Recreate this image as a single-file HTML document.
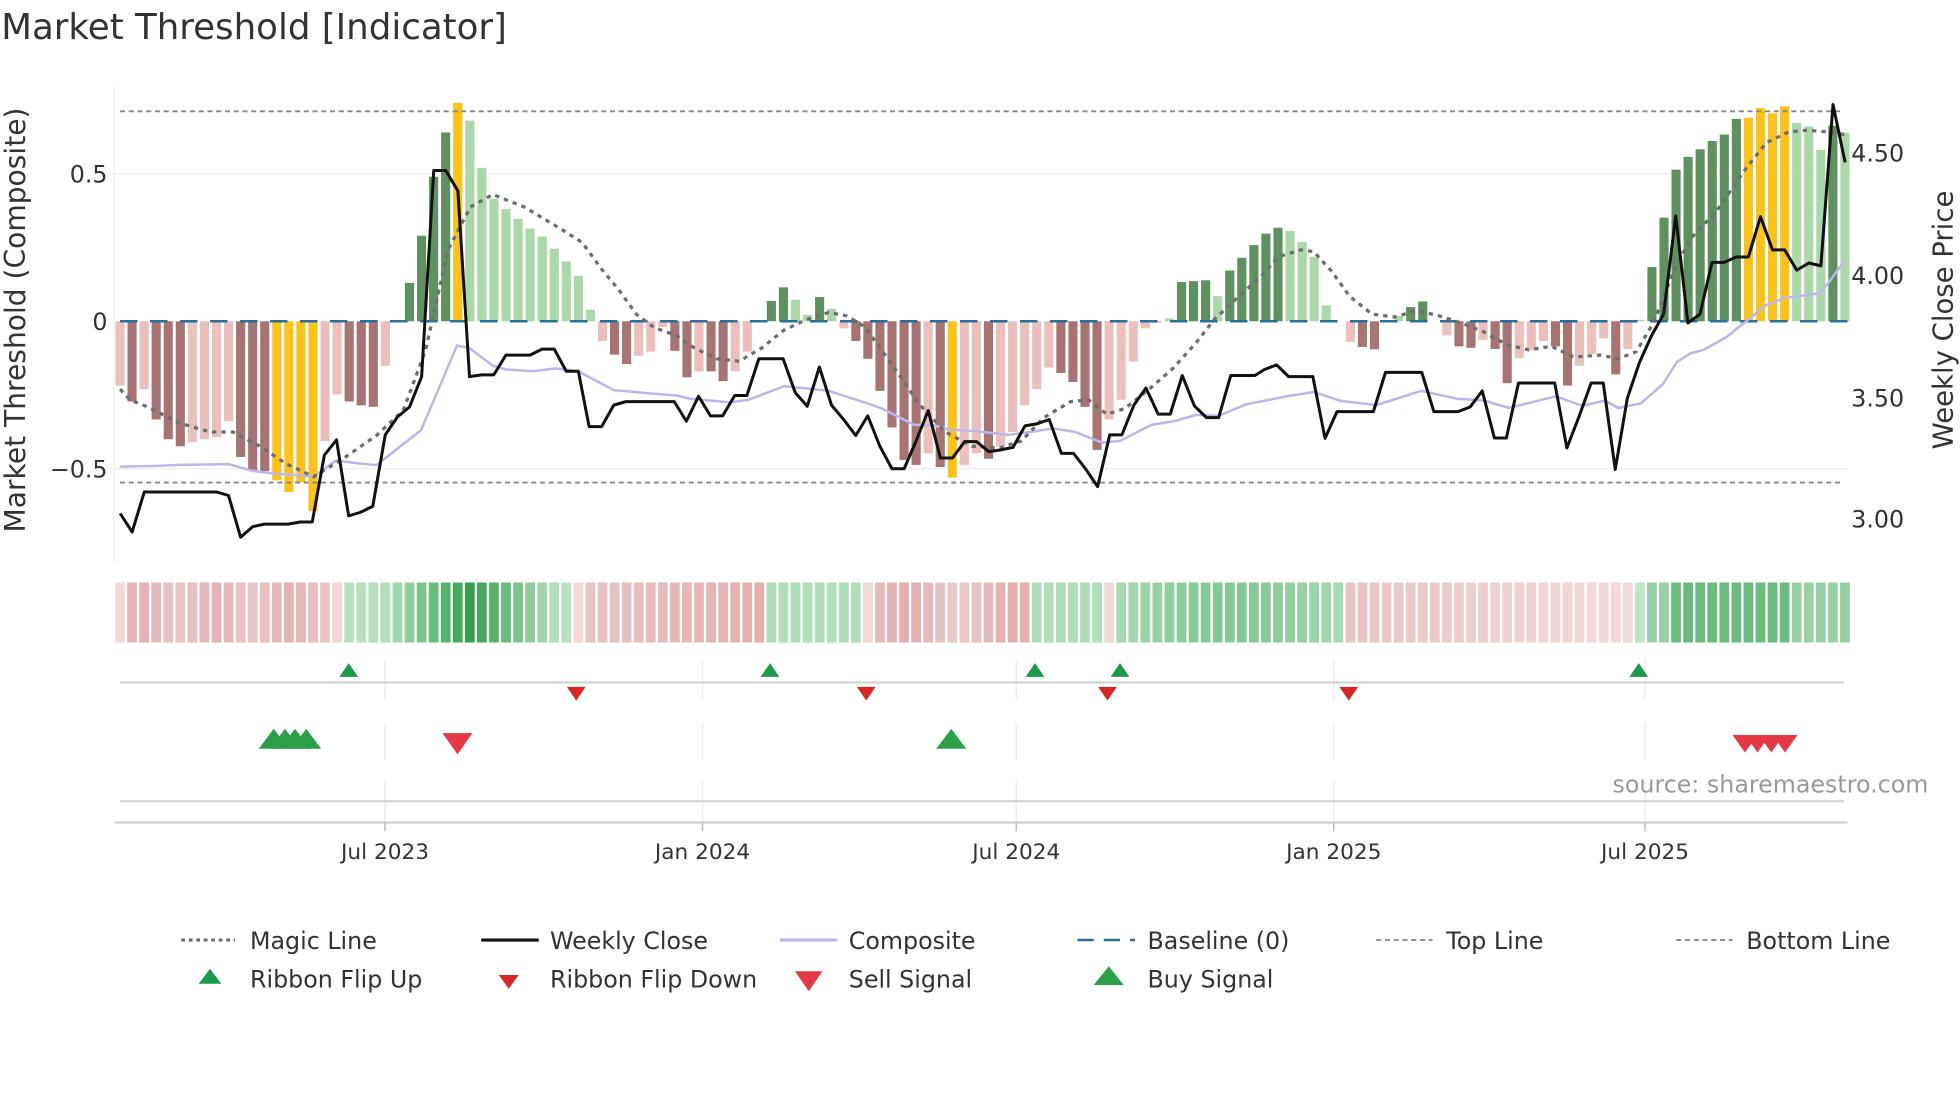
<!DOCTYPE html>
<html><head><meta charset="utf-8"><style>
html,body{margin:0;padding:0;background:#fff;}
svg{display:block;font-family:"DejaVu Sans","Liberation Sans",sans-serif;}
</style></head><body>
<svg id="s" width="1960" height="1102" viewBox="0 0 1568 881.6" xmlns="http://www.w3.org/2000/svg">
<rect width="1568" height="882" fill="#fff"/>
<text x="1" y="31" font-size="28.5" fill="#333">Market Threshold [Indicator]</text>
<line x1="91" y1="65" x2="91" y2="450" stroke="#eef0f3" stroke-width="1"/>
<line x1="91" y1="139" x2="1478" y2="139" stroke="#eef0f4" stroke-width="1.2"/>
<line x1="91" y1="375" x2="1478" y2="375" stroke="#eceefa" stroke-width="1.2"/>
<g id="bars"></g>
<line x1="96" y1="89" x2="1475" y2="89" stroke="#888" stroke-width="1.5" stroke-dasharray="4,3"/>
<line x1="96" y1="386" x2="1475" y2="386" stroke="#888" stroke-width="1.5" stroke-dasharray="4,3"/>
<line x1="96" y1="257" x2="1478" y2="257" stroke="#2a6f97" stroke-width="2" stroke-dasharray="14,10"/>
<g id="lines"></g>
<g font-size="19" fill="#333" text-anchor="end">
<text x="86" y="146">0.5</text><text x="86" y="264">0</text><text x="86" y="382">−0.5</text>
</g>
<g font-size="19" fill="#333">
<text x="1481" y="129">4.50</text><text x="1481" y="227">4.00</text><text x="1481" y="325">3.50</text><text x="1481" y="422">3.00</text>
</g>
<text transform="translate(20,256) rotate(-90)" font-size="22.5" fill="#333" text-anchor="middle">Market Threshold (Composite)</text>
<text transform="translate(1562,256) rotate(-90)" font-size="22" fill="#333" text-anchor="middle">Weekly Close Price</text>
<g id="ribbon"></g>
<g stroke="#eceef1" stroke-width="1.2">
<line x1="308" y1="528" x2="308" y2="560"/><line x1="562" y1="528" x2="562" y2="560"/><line x1="813" y1="528" x2="813" y2="560"/><line x1="1067" y1="528" x2="1067" y2="560"/><line x1="1316" y1="528" x2="1316" y2="560"/>
<line x1="308" y1="578" x2="308" y2="608"/><line x1="562" y1="578" x2="562" y2="608"/><line x1="813" y1="578" x2="813" y2="608"/><line x1="1067" y1="578" x2="1067" y2="608"/><line x1="1316" y1="578" x2="1316" y2="608"/>
<line x1="308" y1="625" x2="308" y2="657"/><line x1="562" y1="625" x2="562" y2="657"/><line x1="813" y1="625" x2="813" y2="657"/><line x1="1067" y1="625" x2="1067" y2="657"/><line x1="1316" y1="625" x2="1316" y2="657"/>
</g>
<line x1="96" y1="546" x2="1475" y2="546" stroke="#d4d4d4" stroke-width="1.8"/>
<line x1="96" y1="641" x2="1475" y2="641" stroke="#d4d4d4" stroke-width="1.8"/>
<line x1="92" y1="658" x2="1478" y2="658" stroke="#d0d0d0" stroke-width="1.8"/>
<g stroke="#bbb" stroke-width="1.2">
<line x1="308" y1="658" x2="308" y2="665"/><line x1="562" y1="658" x2="562" y2="665"/><line x1="813" y1="658" x2="813" y2="665"/><line x1="1067" y1="658" x2="1067" y2="665"/><line x1="1316" y1="658" x2="1316" y2="665"/>
</g>
<g font-size="17.3" fill="#333" text-anchor="middle">
<text x="308" y="687">Jul 2023</text><text x="562" y="687">Jan 2024</text><text x="813" y="687">Jul 2024</text><text x="1067" y="687">Jan 2025</text><text x="1316" y="687">Jul 2025</text>
</g>
<text x="1290" y="634" font-size="19" fill="#999">source: sharemaestro.com</text>
<g id="marks"></g>
<g font-size="19" fill="#333">
<line x1="145" y1="752" x2="188" y2="752" stroke="#6e6e6e" stroke-width="2.5" stroke-dasharray="3,3"/><text x="200" y="759">Magic Line</text>
<line x1="385" y1="752" x2="431" y2="752" stroke="#111" stroke-width="2.5"/><text x="440" y="759">Weekly Close</text>
<line x1="624" y1="752" x2="670" y2="752" stroke="#bdb6ec" stroke-width="2.5"/><text x="679" y="759">Composite</text>
<line x1="862" y1="752" x2="908" y2="752" stroke="#2a6f97" stroke-width="2" stroke-dasharray="13,8"/><text x="918" y="759">Baseline (0)</text>
<line x1="1101" y1="752" x2="1146" y2="752" stroke="#888" stroke-width="1.5" stroke-dasharray="4,3"/><text x="1157" y="759">Top Line</text>
<line x1="1341" y1="752" x2="1386" y2="752" stroke="#888" stroke-width="1.5" stroke-dasharray="4,3"/><text x="1397" y="759">Bottom Line</text>
<polygon points="168,775 177,787 159,787" fill="#1a9a4a"/><text x="200" y="790">Ribbon Flip Up</text>
<polygon points="399,780 415,780 407,791" fill="#d62728"/><text x="440" y="790">Ribbon Flip Down</text>
<polygon points="636,777 658,777 647,793" fill="#e63946"/><text x="679" y="790">Sell Signal</text>
<polygon points="887,773 899,788 875,788" fill="#2ca048"/><text x="918" y="790">Buy Signal</text>
</g>
</svg>
<script>
var NS="http://www.w3.org/2000/svg";
function el(p,t,a){var e=document.createElementNS(NS,t);for(var k in a)e.setAttribute(k,a[k]);p.appendChild(e);return e;}
var P=9.65,X0=96;
var B=[[-.218,'l'],[-.272,'d'],[-.23,'l'],[-.333,'d'],[-.4,'d'],[-.424,'d'],[-.41,'l'],[-.4,'l'],[-.393,'l'],[-.339,'l'],[-.46,'d'],[-.508,'d'],[-.508,'d'],[-.539,'Y'],[-.579,'Y'],[-.545,'Y'],[-.644,'Y'],[-.406,'l'],[-.248,'l'],[-.272,'d'],[-.285,'d'],[-.29,'d'],[-.151,'l'],[0,'l'],
[.13,'D'],[.29,'D'],[.49,'D'],[.64,'D'],[.74,'Y'],[.68,'L'],[.52,'L'],[.415,'L'],[.38,'L'],[.347,'L'],[.314,'L'],[.287,'L'],[.246,'L'],[.203,'L'],[.154,'L'],[.039,'L'],
[-.067,'l'],[-.113,'d'],[-.145,'d'],[-.117,'l'],[-.103,'l'],[-.02,'l'],[-.1,'d'],[-.19,'d'],[-.17,'l'],[-.17,'d'],[-.203,'d'],[-.17,'l'],[-.103,'l'],[0,'l'],
[.069,'D'],[.115,'D'],[.073,'L'],[.022,'L'],[.082,'D'],[.042,'L'],[-.024,'l'],[-.067,'d'],[-.127,'d'],[-.236,'d'],[-.36,'d'],[-.47,'d'],[-.487,'d'],[-.448,'l'],[-.494,'d'],[-.53,'Y'],[-.487,'l'],[-.448,'l'],[-.466,'d'],[-.424,'l'],[-.375,'l'],[-.285,'l'],[-.23,'l'],[-.157,'l'],[-.175,'d'],[-.206,'d'],[-.29,'d'],[-.436,'d'],[-.333,'l'],[-.266,'l'],[-.136,'l'],[-.024,'l'],[-.005,'l'],
[.01,'L'],[.133,'D'],[.136,'D'],[.139,'D'],[.085,'L'],[.172,'D'],[.215,'D'],[.258,'D'],[.297,'D'],[.317,'D'],[.306,'L'],[.269,'L'],[.218,'L'],[.054,'L'],[0,'L'],
[-.07,'l'],[-.087,'d'],[-.095,'d'],[0,'l'],[.018,'L'],[.048,'D'],[.067,'D'],[0,'l'],[-.048,'l'],[-.085,'d'],[-.09,'d'],[-.063,'l'],[-.094,'d'],[-.21,'d'],[-.125,'l'],[-.097,'l'],[-.067,'l'],[-.085,'d'],[-.218,'d'],[-.151,'l'],[-.111,'l'],[-.058,'l'],[-.18,'d'],[-.094,'l'],
[.005,'L'],[.184,'D'],[.351,'D'],[.514,'D'],[.557,'D'],[.583,'D'],[.611,'D'],[.633,'D'],[.686,'D'],[.69,'Y'],[.723,'Y'],[.705,'Y'],[.729,'Y'],[.672,'L'],[.66,'L'],[.581,'L'],[.663,'D'],[.639,'L']];
var C={d:'#a87373',l:'#ebbfbc',D:'#5f9160',L:'#aad8a8',Y:'#fbc21b'};
var g=document.getElementById('bars');
B.forEach(function(b,i){var x=X0+i*P-3.65,h=Math.abs(b[0])*236;if(h<0.5)return;var y=b[0]>0?257-h:257;el(g,'rect',{x:x.toFixed(2),y:y.toFixed(2),width:7.3,height:h.toFixed(2),fill:C[b[1]]});});
var OFF=[0,448,1008];
var L=document.getElementById('lines');
function line(segs,st){var all=[],lastX=-1;segs.forEach(function(s){var p=s[1];for(var i=0;i<p.length;i+=2){var x=p[i]/2.79+OFF[s[0]];if(x<=lastX+0.5)continue;lastX=x;all.push(x.toFixed(1)+','+(257-(900-p[i+1])*0.2857).toFixed(1));}});var a={points:all.join(' '),fill:'none'};for(var k in st)a[k]=st[k];el(L,'polyline',a);}
var comp=[[0,[268,1307,350,1305,400,1302,510,1300,560,1318,600,1325,700,1335,750,1290,800,1298,840,1303,940,1205,1020,968,1048,975,1100,1025,1130,1035,1190,1040,1240,1032,1290,1040,1370,1093,1450,1102,1510,1108]],
[1,[0,1122,40,1128,100,1145,130,1150,250,1110,290,1117,380,1127,420,1120,500,1082,550,1088,600,1095,680,1127,720,1145,790,1190,830,1190,870,1203,930,1208,1000,1218,1050,1210,1100,1200,1150,1210,1210,1240,1250,1235,1320,1190,1370,1180,1420,1162,1470,1165,1530,1133]],
[2,[0,1125,60,1110,120,1098,180,1123,260,1135,360,1095,440,1117,500,1122,555,1143,660,1110,720,1137,770,1122,800,1143,850,1130,900,1075,930,1015,960,990,990,980,1040,945,1090,895,1130,855,1170,835,1250,822,1270,790,1308,725]]];
var magic=[[0,[268,1090,290,1120,330,1140,400,1185,470,1210,520,1210,580,1250,640,1300,700,1335,760,1290,840,1220,900,1150,950,980,1000,700,1050,580,1100,545,1170,580,1250,640,1300,680,1340,750,1380,810,1420,880,1460,918,1510,940]],
[1,[0,645,40,680,100,775,150,855,190,910,250,930,300,975,350,1005,400,1012,450,975,500,925,550,895,600,875,640,885,680,915,720,985,760,1055,800,1130,860,1210,920,1250,980,1255,1030,1235,1080,1170,1140,1125,1180,1120,1220,1160,1260,1145,1320,1085,1370,1030,1420,960,1460,895,1520,825,1568,770]],
[2,[40,720,90,700,120,705,160,760,200,830,250,880,300,888,350,870,400,885,450,905,500,930,550,965,600,980,650,970,700,1000,760,995,800,1005,840,985,880,900,920,770,960,670,1020,590,1080,480,1130,400,1180,370,1220,365,1270,370,1310,378]]];
var close=[[0,[268,1438,295,1490,322,1378,484,1378,510,1388,537,1505,564,1475,590,1468,643,1468,670,1462,697,1462,724,1275,751,1232,778,1445,805,1435,832,1418,860,1218,887,1168,914,1140,941,1055,968,478,995,478,1022,535,1048,1055,1075,1050,1102,1050,1129,995,1156,995,1183,995,1210,978,1237,978,1264,1040,1291,1040]],
[1,[65,1195,93,1195,120,1135,147,1125,255,1125,282,1180,309,1110,336,1165,363,1165,390,1108,417,1108,444,1005,498,1005,525,1100,552,1138,579,1028,606,1135,633,1175,660,1220,687,1165,714,1250,741,1313,768,1313,795,1235,822,1150,849,1283,876,1283,903,1237,930,1237,957,1265,984,1260,1011,1253,1038,1193,1065,1187,1092,1175,1119,1270,1146,1270,1173,1313,1200,1363,1227,1218,1254,1218,1281,1135,1308,1087,1335,1160,1362,1160,1389,1052,1416,1137,1443,1170,1470,1170,1497,1052,1551,1052]],
[2,[10,1035,37,1022,64,1055,118,1055,145,1228,172,1153,253,1153,280,1043,361,1043,388,1153,442,1153,469,1140,496,1095,523,1227,550,1227,577,1073,658,1073,685,1255,712,1167,739,1073,766,1073,793,1315,820,1115,847,1015,874,940,901,880,928,605,955,905,982,880,1009,735,1036,735,1063,720,1090,720,1117,607,1144,700,1171,700,1198,757,1225,737,1252,745,1279,293,1306,455]]];
line(comp,{stroke:'#bdb6ec','stroke-width':2});
line(magic,{stroke:'#6e6e6e','stroke-width':2.6,'stroke-dasharray':'3.5,4'});
line(close,{stroke:'#111','stroke-width':2.4,'stroke-linejoin':'round'});
var R=document.getElementById('ribbon');
function mix(a,b,t){var o='#';for(var k=0;k<3;k++){var x=parseInt(a.substr(1+2*k,2),16),y=parseInt(b.substr(1+2*k,2),16);var v=Math.round(x+(y-x)*t);o+=(v<16?'0':'')+v.toString(16);}return o;}
function rib(i){
 var segs=[[0,18,'r'],[19,37,'g'],[38,53,'r'],[54,61,'g'],[62,75,'r'],[76,81,'g'],[82,82,'r'],[83,101,'g'],[102,125,'r'],[126,143,'g']];
 for(var s=0;s<segs.length;s++){var a=segs[s][0],b=segs[s][1];if(i>=a&&i<=b){var t;
  if(i==0)t=0.1;else if(i==18)t=0.15;else if(i==38||i==62||i==82)t=0.12;
  else if(s==1)t=Math.max(0.2,1-Math.abs(i-29)/9);
  else if(s==0)t=0.45+0.1*Math.sin(i);
  else if(s==2)t=0.35+0.25*(i-38)/15;
  else if(s==3||s==5)t=0.25;
  else if(s==4)t=0.45+0.15*Math.sin(i*0.7);
  else if(s==7)t=0.3+0.2*Math.sin((i-83)/18*3.14);
  else if(s==8)t=0.35-0.25*(i-102)/23;
  else t=i==126?0.15:(i>=129&&i<=138?0.65:0.4);
  return segs[s][2]=='g'?mix('#d8f0dd','#32a04e',t):mix('#f5e2e2','#d88c8c',t);}}
 return '#eee';}
for(var i=0;i<144;i++){el(R,'rect',{x:(X0+i*P-3.9).toFixed(2),y:466,width:7.8,height:48,fill:rib(i)});}
var M=document.getElementById('marks');
function up(x,y,w,h,c){el(M,'polygon',{points:x+','+(y-h/2)+' '+(x+w/2)+','+(y+h/2)+' '+(x-w/2)+','+(y+h/2),fill:c});}
function dn(x,y,w,h,c){el(M,'polygon',{points:(x-w/2)+','+(y-h/2)+' '+(x+w/2)+','+(y-h/2)+' '+x+','+(y+h/2),fill:c});}
[279,616,828,896,1311].forEach(function(x){up(x,536,15,11,'#1a9a4a');});
[461,693,886,1079].forEach(function(x){dn(x,555,15,11,'#d62728');});
[219,228,236,245].forEach(function(x){up(x,591,24,16,'#2ca048');});
up(761,591,24,16,'#2ca048');
dn(366,595,24,17,'#e63946');
[1396,1406,1417,1428].forEach(function(x){dn(x,595,20,14,'#e63946');});
</script>
</body></html>
